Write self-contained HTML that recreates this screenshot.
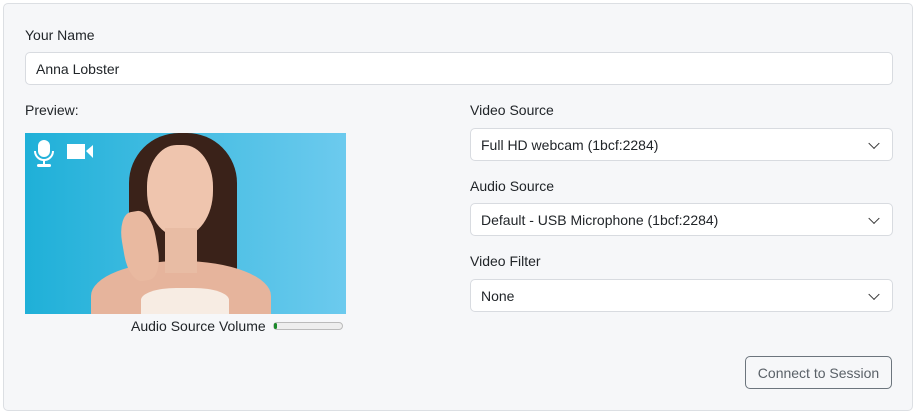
<!DOCTYPE html>
<html><head><meta charset="utf-8"><style>
*{box-sizing:border-box;margin:0;padding:0}
body{width:917px;height:416px;background:#fff;font-family:"Liberation Sans",sans-serif;font-size:14px;color:#212529;position:relative;overflow:hidden}
.card{position:absolute;left:3px;top:3px;width:910px;height:408px;background:#f6f7f9;border:1px solid #dcdfe3;border-radius:5px}
.lbl{position:absolute;font-size:14px;color:#212529}
.inp{position:absolute;background:#fff;border:1px solid #d8dbe0;border-radius:5px;padding-left:10px;font-size:14px;display:flex;align-items:center}
.sel:after{content:"";position:absolute;right:14px;top:50%;width:7px;height:7px;border-right:1.5px solid #333;border-bottom:1.5px solid #333;transform:translateY(-70%) rotate(45deg)}
.vid{position:absolute;left:25px;top:133px;width:321px;height:181px;background:linear-gradient(90deg,#1fb0d8,#4ec0e5 60%,#6ccaee);overflow:hidden}
.btn{position:absolute;left:745px;top:356px;width:147px;height:33px;border:1px solid #6c757d;border-radius:5px;color:#5a6168;font-size:14px;display:flex;align-items:center;justify-content:center}
</style></head><body>
<div class="card"></div>
<div class="lbl" style="left:25px;top:27px">Your Name</div>
<div class="inp" style="left:25px;top:52px;width:868px;height:33px">Anna Lobster</div>
<div class="lbl" style="left:25px;top:102px">Preview:</div>
<div class="vid">
 <div style="position:absolute;left:104px;top:0;width:108px;height:181px;background:#3a2219;border-radius:50px 50px 10px 10px"></div>
 <div style="position:absolute;left:66px;top:128px;width:180px;height:70px;background:#e6b49c;border-radius:50% 50% 0 0"></div>
 <div style="position:absolute;left:122px;top:12px;width:66px;height:92px;background:#efc5ae;border-radius:45% 45% 50% 50%"></div>
 <div style="position:absolute;left:140px;top:95px;width:32px;height:45px;background:#e8bca4"></div>
 <div style="position:absolute;left:116px;top:155px;width:88px;height:30px;background:#f7ece3;border-radius:40% 40% 0 0"></div>
 <div style="position:absolute;left:98px;top:78px;width:34px;height:70px;background:#e9b9a0;border-radius:40%;transform:rotate(-10deg)"></div>
 <svg style="position:absolute;left:8px;top:6px" width="22" height="30" viewBox="0 0 22 30"><rect x="5" y="1" width="12" height="17" rx="6" fill="#fff"/><path d="M2 12a9 9 0 0 0 18 0" stroke="#fff" stroke-width="2" fill="none"/><rect x="10" y="20" width="2" height="5" fill="#fff"/><rect x="4" y="25" width="14" height="3" rx="1.5" fill="#fff"/></svg>
 <svg style="position:absolute;left:42px;top:8px" width="28" height="20" viewBox="0 0 28 20"><rect x="0" y="3" width="18" height="15" fill="#fff"/><path d="M19 10l7-6v13z" fill="#fff"/></svg>
</div>
<div class="lbl" style="left:131px;top:318px">Audio Source Volume</div>
<div style="position:absolute;left:273px;top:322px;width:70px;height:8px;border:1px solid #bbb;border-radius:4px;background:#eee"><div style="width:3px;height:6px;background:#1a8a2a;border-radius:3px"></div></div>
<div class="lbl" style="left:470px;top:102px">Video Source</div>
<div class="inp sel" style="left:470px;top:128px;width:423px;height:33px">Full HD webcam (1bcf:2284)</div>
<div class="lbl" style="left:470px;top:178px">Audio Source</div>
<div class="inp sel" style="left:470px;top:203px;width:423px;height:33px">Default - USB Microphone (1bcf:2284)</div>
<div class="lbl" style="left:470px;top:253px">Video Filter</div>
<div class="inp sel" style="left:470px;top:279px;width:423px;height:33px">None</div>
<div class="btn">Connect to Session</div>
</body></html>
